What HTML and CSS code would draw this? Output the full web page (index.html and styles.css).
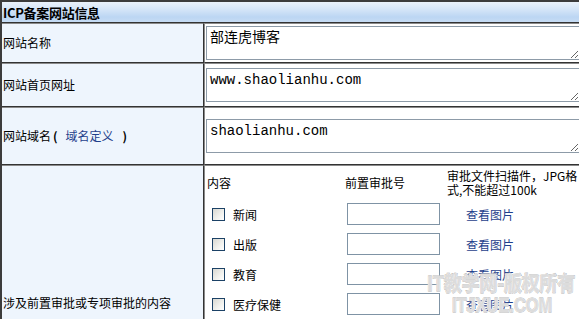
FILE: index.html
```html
<!DOCTYPE html>
<html lang="zh-CN">
<head>
<meta charset="utf-8">
<title>ICP备案网站信息</title>
<link rel="stylesheet" href="styles.css">
</head>
<body>
<div class="page">
  <div class="form">
    <div class="head">ICP备案网站信息</div>

    <div class="label">网站名称</div>
    <div class="field"><textarea class="box">部连虎博客</textarea></div>

    <div class="label">网站首页网址</div>
    <div class="field"><textarea class="box">www.shaolianhu.com</textarea></div>

    <div class="label">网站域名<b class="paren">(</b> <a class="link def" href="#">域名定义</a> <b class="paren">)</b></div>
    <div class="field"><textarea class="box">shaolianhu.com</textarea></div>

    <div class="label">涉及前置审批或专项审批的内容</div>
    <div class="field top">
      <div class="approval">
        <div class="hcell">内容</div>
        <div class="hcell">前置审批号</div>
        <div class="hcell note">审批文件扫描件，JPG格式,不能超过100k</div>

        <label class="item"><input type="checkbox" class="chk"><span>新闻</span></label>
        <div class="num"><input type="text" class="txt"></div>
        <div class="pic"><a class="link" href="#">查看图片</a></div>

        <label class="item"><input type="checkbox" class="chk"><span>出版</span></label>
        <div class="num"><input type="text" class="txt"></div>
        <div class="pic"><a class="link" href="#">查看图片</a></div>

        <label class="item"><input type="checkbox" class="chk"><span>教育</span></label>
        <div class="num"><input type="text" class="txt"></div>
        <div class="pic"><a class="link" href="#">查看图片</a></div>

        <label class="item"><input type="checkbox" class="chk"><span>医疗保健</span></label>
        <div class="num"><input type="text" class="txt"></div>
        <div class="pic"><a class="link" href="#">查看图片</a></div>

        <label class="item"><input type="checkbox" class="chk"><span>药品和医疗器械</span></label>
        <div class="num"><input type="text" class="txt"></div>
        <div class="pic"><a class="link" href="#">查看图片</a></div>

        <label class="item"><input type="checkbox" class="chk"><span>电子公告服务</span></label>
        <div class="num"><input type="text" class="txt"></div>
        <div class="pic"><a class="link" href="#">查看图片</a></div>

        <label class="item"><input type="checkbox" class="chk"><span>文化</span></label>
        <div class="num"><input type="text" class="txt"></div>
        <div class="pic"><a class="link" href="#">查看图片</a></div>

        <label class="item"><input type="checkbox" class="chk"><span>广播电影电视节目</span></label>
        <div class="num"><input type="text" class="txt"></div>
        <div class="pic"><a class="link" href="#">查看图片</a></div>
      </div>
    </div>
  </div>

  <div class="watermark">
    <div class="wm1">IT教学网-版权所有</div>
    <div class="wm2">ITJXUE.COM</div>
  </div>
</div>
</body>
</html>
```

FILE: styles.css
```css
html, body {
  margin: 0;
  padding: 0;
  background: #fff;
}

body {
  width: 579px;
  height: 319px;
  overflow: hidden;
  font-family: "Noto Sans CJK SC", "Liberation Sans", sans-serif;
  font-size: 12px;
  color: #000;
}

.page {
  position: relative;
  width: 579px;
  height: 319px;
  overflow: hidden;
}

.form {
  display: grid;
  grid-template-columns: 202px 392px;
  width: 594px;
  border-top: 2px solid #3c3c3c;
  border-left: 2px solid #3c3c3c;
}

.head {
  grid-column: 1 / -1;
  height: 20px;
  line-height: 21px;
  padding-left: 1px;
  border-bottom: 1px solid #333;
  background: linear-gradient(#eaf2fb 0%, #d6e6f8 35%, #bcd6f3 75%, #c6dcf4 100%);
  font-weight: bold;
  font-size: 13px;
  letter-spacing: -0.3px;
}

.label,
.field {
  box-sizing: border-box;
  border-top: 1px solid #8a8a8a;
  border-bottom: 1px solid #333;
}

.label {
  display: flex;
  align-items: center;
  padding-left: 1px;
  border-right: 1px solid #333;
  background: #eef5fd;
  line-height: 14px;
  white-space: pre;
}

.paren {
  font-weight: bold;
  margin-left: 2px;
}

.field {
  display: flex;
  align-items: center;
  padding-left: 1px;
  border-left: 1px solid #8a8a8a;
  background: #fff;
}

.form > .label:nth-child(2), .form > .field:nth-child(3) { height: 40px; }
.form > .label:nth-child(4), .form > .field:nth-child(5) { height: 44px; }
.form > .label:nth-child(6), .form > .field:nth-child(7) { height: 58px; }

.field.top {
  align-items: flex-start;
}

.box {
  box-sizing: border-box;
  width: 374px;
  height: 34px;
  margin: 0;
  padding: 3px 3px 1px;
  border: 1px solid #8d9ba8;
  font-family: "Liberation Mono", "Noto Sans CJK SC", monospace;
  font-size: 14px;
  line-height: 16px;
  color: #000;
  background: #fff;
  overflow: hidden;
}

.link {
  color: #1f3f8c;
  text-decoration: none;
}

.def {
  margin: 0 7px 0 8px;
}

.approval {
  display: grid;
  grid-template-columns: 138px 102px 140px;
  grid-template-rows: 33px;
  grid-auto-rows: 30px;
  padding-left: 1px;
}

.hcell {
  display: flex;
  align-items: center;
  line-height: 14px;
}

.note {
  word-break: break-all;
  padding-right: 4px;
}

.item {
  display: flex;
  align-items: center;
}

.chk {
  appearance: none;
  -webkit-appearance: none;
  box-sizing: border-box;
  width: 13px;
  height: 13px;
  margin: 0 0 0 5px;
  border: 1px solid #1c4266;
  background: linear-gradient(135deg, #d8d8d2 0%, #f2f2ee 60%, #ffffff 100%);
}

.item span {
  margin-left: 8px;
}

.num {
  display: flex;
  align-items: center;
}

.txt {
  box-sizing: border-box;
  width: 93px;
  height: 22px;
  margin: 0 0 0 2px;
  padding: 0 2px;
  border: 1px solid #7f93a5;
  background: #fff;
}

.pic {
  display: flex;
  align-items: center;
  padding-left: 19px;
}

.watermark {
  position: absolute;
  left: 427px;
  top: 270px;
  pointer-events: none;
  font-weight: bold;
  color: #dcdcdc;
  -webkit-text-stroke: 1px #9a9a9a;
  paint-order: stroke fill;
  text-shadow: 0 0 2px #fff, 0 0 1px #fff;
}

.wm1 {
  font-family: "Noto Sans CJK SC", sans-serif;
  font-size: 20px;
  line-height: 25px;
  white-space: nowrap;
  transform: scaleX(0.89);
  transform-origin: left top;
}

.wm2 {
  margin-left: 25px;
  font-family: "Liberation Sans", sans-serif;
  font-size: 21px;
  line-height: 20px;
  white-space: nowrap;
  transform: scaleX(0.78);
  transform-origin: left top;
}
```
